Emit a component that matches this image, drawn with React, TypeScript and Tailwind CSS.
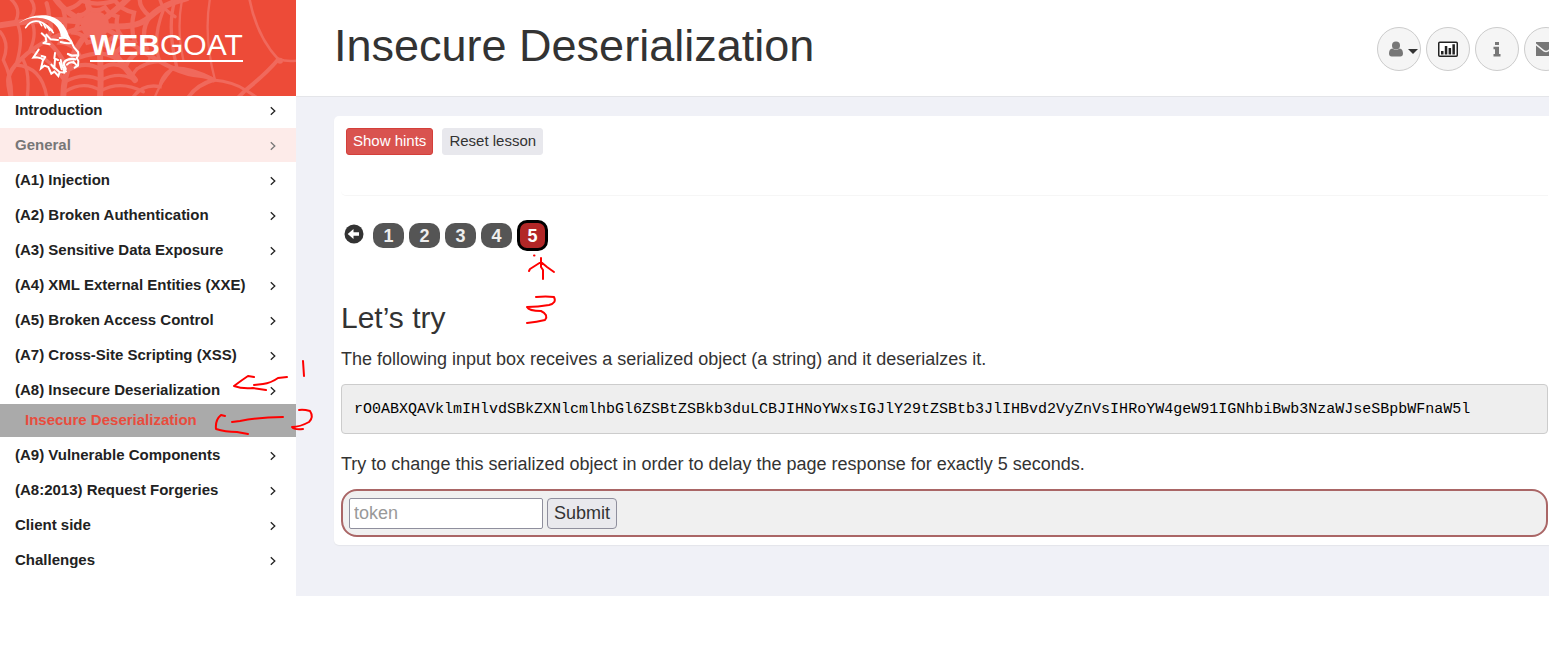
import { useState } from "react";
import { clsx } from "clsx";

type NavItem = {
  label: string;
  highlighted?: boolean;
  lessons?: string[];
};

const navItems: NavItem[] = [
  { label: "Introduction" },
  { label: "General", highlighted: true },
  { label: "(A1) Injection" },
  { label: "(A2) Broken Authentication" },
  { label: "(A3) Sensitive Data Exposure" },
  { label: "(A4) XML External Entities (XXE)" },
  { label: "(A5) Broken Access Control" },
  { label: "(A7) Cross-Site Scripting (XSS)" },
  { label: "(A8) Insecure Deserialization", lessons: ["Insecure Deserialization"] },
  { label: "(A9) Vulnerable Components" },
  { label: "(A8:2013) Request Forgeries" },
  { label: "Client side" },
  { label: "Challenges" },
];

const serialized =
  "rO0ABXQAVklmIHlvdSBkZXNlcmlhbGl6ZSBtZSBkb3duLCBJIHNoYWxsIGJlY29tZSBtb3JlIHBvd2VyZnVsIHRoYW4geW91IGNhbiBwb3NzaWJseSBpbWFnaW5l";

function WebPattern() {
  return (
    <svg
      className="absolute inset-0 h-full w-full"
      viewBox="0 0 888 288"
      preserveAspectRatio="xMinYMin slice"
      fill="none"
      stroke="#f0695c"
      strokeLinecap="round"
      aria-hidden="true"
    >
      {/* threads running out from the centre */}
      <g strokeWidth="18">
        <path d="M290 75 C230 62 190 30 165 -5" />
        <path d="M290 75 C200 50 90 60 0 76" />
        <path d="M290 75 C190 90 110 130 60 180 S25 250 32 290" strokeWidth="13" />
        <path d="M290 75 C220 130 190 220 190 290" />
        <path d="M290 75 C300 130 305 220 300 290" />
        <path d="M290 75 C330 150 380 210 405 240" />
        <path d="M290 75 C360 100 440 170 520 205 S600 215 640 240" strokeWidth="14" />
        <path d="M290 75 C370 85 420 80 450 50 S520 5 560 -5" />
        <path d="M290 75 C320 50 350 30 385 -5" />
        <path d="M290 75 C275 50 262 20 262 -5" />
      </g>
      <circle cx="285" cy="75" r="42" fill="#f0695c" stroke="none" />
      {/* rings */}
      <g strokeWidth="13">
        <path d="M235 45 Q255 48 268 25 Q290 38 315 22 Q330 45 352 50 Q345 85 362 105 Q330 110 315 135 Q295 118 262 128 Q250 100 222 98 Q240 70 235 45" />
        <path d="M190 30 Q225 25 245 2 Q290 20 345 2 Q365 30 402 38 Q390 85 405 125 Q355 135 342 172 Q300 150 240 172 Q225 130 180 128 Q205 80 190 30" />
        <path d="M140 10 Q150 40 145 60 Q165 85 138 120 Q180 155 205 210 Q255 180 302 208 Q340 180 375 205 Q390 160 440 145 Q420 90 450 50 Q415 20 420 -5" />
      </g>
      <g strokeWidth="10">
        <path d="M90 -5 Q115 25 90 55 Q115 95 90 150 Q155 180 195 245 Q250 215 303 240 Q355 215 395 235 Q405 190 480 185 Q455 120 490 30" />
        <path d="M30 -5 Q65 25 48 62 Q75 110 48 195 Q125 200 140 290 M195 275 Q250 240 303 272 Q360 240 430 275" />
        <path d="M0 95 Q30 130 10 180 Q35 230 35 290 M70 180 Q90 220 82 290 M525 0 Q500 80 530 200 Q485 220 480 260 Q430 250 400 290 M480 0 Q485 25 525 50" />
        <path d="M545 5 Q530 90 550 180 M410 205 Q450 200 450 160 M465 290 Q480 250 520 205" strokeWidth="7" />
      </g>
      {/* outer threads */}
      <g strokeWidth="9">
        <path d="M630 -5 Q610 110 645 240" strokeWidth="7" />
        <path d="M748 -5 Q770 110 835 178 Q860 185 890 182" strokeWidth="8" />
        <path d="M835 178 Q800 220 735 272 L715 292" strokeWidth="12" />
        <path d="M520 205 Q580 205 640 240 Q590 255 565 292" strokeWidth="12" />
        <path d="M640 240 Q700 245 740 272 L770 292" />
      </g>
      <circle cx="840" cy="182" r="9" fill="#f0695c" stroke="none" />
    </svg>
  );
}

function Goat() {
  return (
    <svg
      className="h-16 w-16 shrink-0"
      viewBox="8 8 192 192"
      fill="none"
      stroke="#fff"
      strokeLinecap="round"
      strokeLinejoin="round"
      aria-hidden="true"
    >
      {/* horns */}
      <path
        d="M10 36 C32 18 60 9 92 12 C130 17 150 42 160 72 L168 86 L150 78 L136 76 C137 58 122 36 99 26 C70 15 38 18 10 36Z"
        fill="#fff"
        stroke="none"
      />
      <path d="M31 49 C40 34 54 27 70 30 C88 34 100 46 111 58" strokeWidth="5" />
      <path d="M72 31 L79 43 M84 37 L91 50 M95 45 L103 57 M106 54 L114 64" strokeWidth="5" />
      {/* ear and brow */}
      <path d="M79 66 L91 77 L93 90 L84 95 L103 99 M93 70 L106 84 L128 86" strokeWidth="6" />
      <path d="M133 80 C147 77 160 81 168 92 M136 92 Q152 97 168 95" strokeWidth="6" />
      {/* muzzle and mouth */}
      <path d="M166 87 L176 108 L188 122 L189 132 L184 140 L189 149 L188 163 L178 169" strokeWidth="6" />
      <path d="M158 128 L169 133 L184 132 M180 144 L172 143 C156 142 143 150 146 162 L151 173" strokeWidth="7" />
      <path d="M155 160 Q164 149 177 155 M174 151 L184 162" strokeWidth="6" />
      {/* beard */}
      <path
        d="M70 115 L54 139 L64 138 L78 141 L83 146 L77 171 L87 163 L99 167 L108 187 L117 181 L129 194 L133 182 L146 184 L145 177 L153 182 L141 166 L136 146"
        strokeWidth="6"
        strokeLinejoin="miter"
      />
      <path d="M84 146 L90 137 L79 134 M119 125 L117 141 L128 146 M119 145 L117 170 L108 160 M118 169 L130 180 M133 154 L139 174" strokeWidth="6" />
    </svg>
  );
}

function AngleRight() {
  return (
    <svg className="mt-[2px] h-[10px] w-[6px]" viewBox="0 0 6 10" fill="none" stroke="currentColor" strokeWidth="1.3" aria-hidden="true">
      <path d="M0.8 1.2 L4.800 5 L0.8 8.800" />
    </svg>
  );
}

function Sidebar() {
  return (
    <aside className="w-[296px] shrink-0 bg-white">
      <div className="relative flex h-24 items-center overflow-hidden bg-[#ed4b38] pb-1 pl-[18px]">
        <WebPattern />
        <a href="#home" className="relative flex items-center gap-2 text-white">
          <Goat />
          <span className="border-b-2 border-white text-[30px] leading-[30px]">
            <b>WEB</b>GOAT
          </span>
        </a>
      </div>
      <nav className="text-[15px] font-bold text-[#222]">
        <ul className="relative -mt-[3px]">
          {navItems.map((item) => (
            <li key={item.label} className="mb-px">
              <a
                href="#category"
                className={clsx(
                  "flex h-[34px] items-center justify-between pr-5 pl-[15px]",
                  item.highlighted && "bg-[#fdebe9] text-[#777]"
                )}
              >
                {item.label}
                <AngleRight />
              </a>
              {item.lessons && (
                <ul className="-mt-[3px]">
                  {item.lessons.map((lesson) => (
                    <li key={lesson}>
                      <a href="#lesson" className="flex h-[33px] items-center bg-[#aaa] pl-[25px] text-[#e84c3d]">
                        {lesson}
                      </a>
                    </li>
                  ))}
                </ul>
              )}
            </li>
          ))}
        </ul>
      </nav>
    </aside>
  );
}

const roundButton =
  "flex size-11 shrink-0 items-center justify-center rounded-full border border-[#ccc] bg-[#f5f5f5] text-[#777]";

function Toolbar() {
  return (
    <div className="-mr-[19px] flex shrink-0 gap-[5px]">
      <button className={clsx(roundButton, "gap-[5px] pl-2")} aria-label="User menu">
        <svg className="h-4 w-[14px]" viewBox="0 0 14 16" fill="currentColor">
          <circle cx="7" cy="4.5" r="4" />
          <path d="M3.4 7.4 C1 7.5 0 9.8 0 12.5 C0 14.5 1 15.5 2.7 15.5 H11.3 C13 15.5 14 14.5 14 12.5 C14 9.8 13 7.5 10.6 7.4 C8.5 9.3 5.5 9.3 3.4 7.4Z" />
        </svg>
        <svg className="mt-1 h-[5px] w-[10px]" viewBox="0 0 10 5" fill="#333">
          <path d="M0 0 H10 L5 5Z" />
        </svg>
      </button>
      <button className={roundButton} aria-label="Report card">
        <svg className="h-4 w-5" viewBox="0 0 20 16" fill="#222">
          <rect x="0.75" y="1.25" width="18.5" height="14" rx="1" fill="#fff" stroke="#222" strokeWidth="1.5" />
          <path d="M3 10h2.5v3.500H3z M6.800 5h2.500v8.500H6.800z M10.600 7h2.500v6.500h-2.500z M14.400 3.200h2.500v10.300h-2.500z" />
        </svg>
      </button>
      <button className={roundButton} aria-label="About">
        <svg className="h-4 w-2" viewBox="0 0 8 16" fill="currentColor">
          <path d="M2 1h4v3H2z M0.5 5.8h5.500v7.200h1.500v2.500H0.500v-2.500h1.500V8.300H0.500z" />
        </svg>
      </button>
      <button className={roundButton} aria-label="Contact">
        <svg className="h-4 w-[22px]" viewBox="0 0 22 16" fill="currentColor">
          <path d="M1 1h20v1.500L13 9q-2 1.500-4 0L1 2.500z M1 4.500L8.500 10.500q2.500 1.500 5 0L21 4.500V15H1z" />
        </svg>
      </button>
    </div>
  );
}

function Pager({ page, onChange }: { page: number; onChange: (page: number) => void }) {
  return (
    <div className="flex h-[31px] items-center pl-[3px]">
      <button className="mr-[9px] pb-1 text-[#333]" aria-label="Previous page" onClick={() => onChange(Math.max(1, page - 1))}>
        <svg className="size-5" viewBox="0 0 20 20">
          <circle cx="10" cy="10" r="9.5" fill="currentColor" />
          <path d="M3.7 10 L9.5 5 V8.200 H15 V11.800 H9.500 V15Z" fill="#fff" />
        </svg>
      </button>
      <div className="flex items-center gap-[5px]">
        {[1, 2, 3, 4, 5].map((n) => (
          <button
            key={n}
            onClick={() => onChange(n)}
            className={clsx(
              "w-[31px] rounded-[10px] text-lg font-bold",
              n === page
                ? "h-[31px] border-[3px] border-black bg-[#b22727] leading-6 text-white"
                : "h-[25px] bg-[#555] pt-px leading-6 text-[#eee]"
            )}
          >
            {n}
          </button>
        ))}
      </div>
    </div>
  );
}

// red pen notes marking the order of the clicks
function PenNotes() {
  return (
    <svg
      className="pointer-events-none absolute top-0 left-0 h-[340px] w-[570px] overflow-visible"
      viewBox="0 0 570 340"
      fill="none"
      stroke="#fe0000"
      strokeWidth="2"
      strokeLinecap="round"
      strokeLinejoin="round"
      aria-hidden="true"
    >
      <path d="M303 361 L304 376" />
      <path d="M287 377 L278 378 Q271 383 263 384 L254 385 M254 377 L248 376 Q242 380 234 386 Q242 389 253 388 L266 390" />
      <path d="M299 410 Q303 409 310 411 Q314 417 309 422 Q300 427 292 427 Q294 430 303 429" />
      <path d="M283 417 Q260 417 240 421 L232 422 M225 416 L221 415 Q215 420 216 429 Q225 432 237 432 L248 434" />
      <path d="M541 258 L541 267 L543 270 L543 279 M541 262 L530 269 L529 271 M541 262 L547 267 L554 272" />
      <path d="M534 255.5 h0.500" />
      <path d="M536 297 Q546 296 554 297 Q557 303 549 305 Q538 307 527 307 Q529 311 541 311 Q549 315 545 320 Q537 322 527 323" />
    </svg>
  );
}

export default function App() {
  const [page, setPage] = useState(5);
  const [token, setToken] = useState("");

  return (
    <div className="relative overflow-hidden bg-white font-['Liberation_Sans',Arial,sans-serif] text-[#333]">
      <div className="flex">
        <Sidebar />
        <div className="flex min-w-0 grow flex-col">
          <header className="flex h-[97px] items-center justify-between border-b border-[#e4e5e9] bg-white pt-[2px] pl-[38px]">
            <h1 className="pb-[6px] text-[45px] leading-[50px]">Insecure Deserialization</h1>
            <Toolbar />
          </header>
          <main className="grow bg-[#f0f1f7] pt-[19px] pb-[51px] pl-[38px]">
            <section className="rounded-l-[5px] bg-white pr-px pb-2 pl-[7px] shadow-[0_1px_1px_#e4e5ea]">
              <div className="flex h-20 items-start gap-[9px] rounded-bl-[5px] border-b border-[#f6f6f6] pt-3 pl-[5px] text-[15px]">
                <button className="h-[27px] rounded-[3px] border border-[#d43f3a] bg-[#d9534f] px-[6px] text-white">
                  Show hints
                </button>
                <button className="h-[27px] rounded-[3px] border border-[#e8e8ed] bg-[#e8e8ed] px-[6px]">
                  Reset lesson
                </button>
              </div>
              <div className="pt-6">
                <Pager page={page} onChange={setPage} />
              </div>
              <h2 className="mt-[49px] text-[30px] leading-9">Let’s try</h2>
              <p className="mt-[11px] text-lg leading-6">
                The following input box receives a serialized object (a string) and it deserialzes it.
              </p>
              <pre className="mt-[13px] h-[50px] overflow-hidden rounded-[4px] border border-[#ccc] bg-[#eee] px-3 font-['Liberation_Mono',monospace] text-[15px] leading-[50px] text-black">
                {serialized}
              </pre>
              <p className="mt-[18px] text-lg leading-6">
                Try to change this serialized object in order to delay the page response for exactly 5 seconds.
              </p>
              <form
                className="mt-[13px] flex h-12 items-center gap-1 rounded-2xl border-2 border-[#a66] bg-[#f0f0f0] px-[6px] text-lg"
                onSubmit={(e) => e.preventDefault()}
              >
                <input
                  type="text"
                  name="token"
                  aria-label="token"
                  placeholder="token"
                  value={token}
                  onChange={(e) => setToken(e.target.value)}
                  className="h-[31px] w-[194px] rounded-[2px] border border-[#8f8f9d] bg-white px-1 placeholder:text-[#999]"
                />
                <button type="submit" className="h-[31px] rounded-[4px] border border-[#8f8f9d] bg-[#e9e9ed] px-[6px]">
                  Submit
                </button>
              </form>
            </section>
          </main>
        </div>
      </div>
      <PenNotes />
    </div>
  );
}
